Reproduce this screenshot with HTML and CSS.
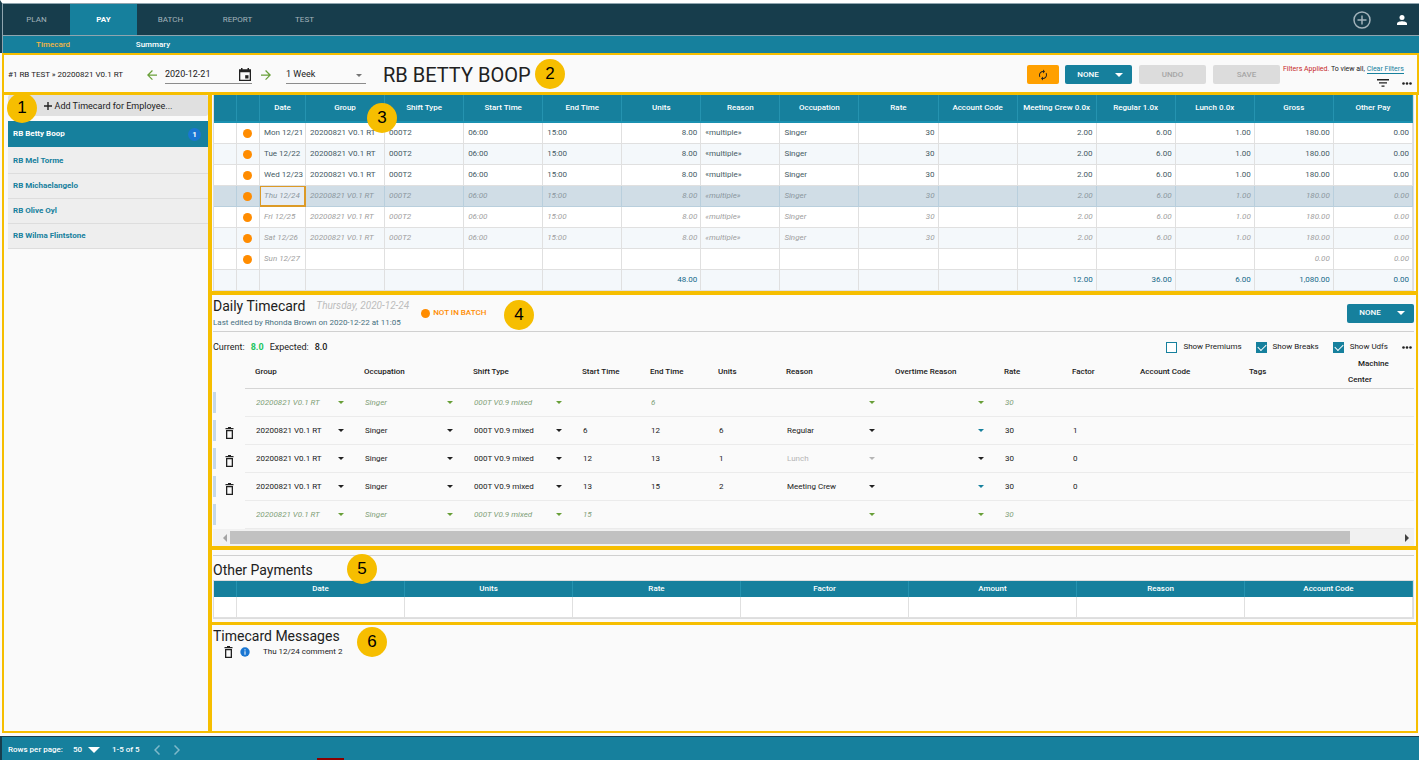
FILE: index.html
```html
<!DOCTYPE html>
<html lang="en">
<head>
  <meta charset="UTF-8" />
  <meta name="viewport" content="width=device-width, initial-scale=1.0" />
  <title>Timecard</title>
  <link rel="stylesheet" href="styles.css">
</head>
<body>
  <svg class="sprite" aria-hidden="true">
    <symbol id="icon-trash" viewBox="0 0 9 12">
      <path d="M3 0h3v1h2.500v1.300H.5V1H3z" />
      <path d="M1 3h7v9H1zM2.300 4.300v6.400h4.400V4.300z" fill-rule="evenodd" />
    </symbol>
    <symbol id="icon-dots" viewBox="0 0 10 3">
      <circle cx="1.5" cy="1.5" r="1.3" /><circle cx="5" cy="1.5" r="1.3" /><circle cx="8.5" cy="1.5" r="1.3" />
    </symbol>
    <symbol id="icon-arrow" viewBox="4 4 16 16">
      <path d="M12 4l-1.4 1.4 5.6 5.6H4v2h12.2l-5.6 5.6L12 20l8-8z" />
    </symbol>
  </svg>

  <header class="header">
    <nav class="tabs">
      <a href="#plan">PLAN</a>
      <a href="#pay" class="active">PAY</a>
      <a href="#batch">BATCH</a>
      <a href="#report">REPORT</a>
      <a href="#test">TEST</a>
      <div class="tabs-actions">
        <button class="icon-btn add-icon" aria-label="Add">
          <svg width="18" height="18" viewBox="0 0 18 18"><circle cx="9" cy="9" r="8" /><path d="M9 4.5v9M4.5 9h9" /></svg>
        </button>
        <button class="icon-btn account" aria-label="Account">
          <svg width="10" height="10" viewBox="0 0 10 10"><circle cx="5" cy="2.5" r="2.5" /><path d="M0 10V8.600C0 7 3 6.200 5 6.200s5 .8 5 2.400V10z" /></svg>
        </button>
      </div>
    </nav>
    <nav class="subtabs">
      <a href="#timecard" class="active">Timecard</a>
      <a href="#summary">Summary</a>
    </nav>
  </header>

  <div class="toolbar">
    <span class="breadcrumb">#1 RB TEST » 20200821 V0.1 RT</span>
    <button class="icon-btn green prev" aria-label="Previous period"><svg width="10" height="10"><use href="#icon-arrow" /></svg></button>
    <div class="date-field">
      <input type="text" value="2020-12-21" aria-label="Start date">
      <svg width="12" height="13" viewBox="0 0 12 13"><path d="M2 0h1.500v1.200h5V0H10v1.200h2V13H0V1.200h2zM1.300 4.200v7.500h9.400V4.200z" fill-rule="evenodd" /><path d="M6.200 7.200h3.300v3.300H6.200z" /></svg>
    </div>
    <button class="icon-btn green" aria-label="Next period"><svg width="10" height="10"><use href="#icon-arrow" /></svg></button>
    <span class="select period">
      <select aria-label="Period"><option>1 Week</option></select>
    </span>
    <h1>RB BETTY BOOP</h1>
    <div class="toolbar-actions">
      <button class="btn refresh" aria-label="Refresh">
        <svg width="12" height="12" viewBox="0 0 24 24"><path d="M12 6v3l4-4-4-4v3c-4.420 0-8 3.580-8 8 0 1.570.46 3.030 1.240 4.260L6.700 14.800C6.250 13.970 6 13.010 6 12c0-3.310 2.690-6 6-6zm6.760 1.740L17.300 9.200c.44.84.7 1.790.7 2.800 0 3.310-2.690 6-6 6v-3l-4 4 4 4v-3c4.420 0 8-3.580 8-8 0-1.570-.46-3.030-1.240-4.260z" /></svg>
      </button>
      <button class="btn primary">NONE <i class="caret"></i></button>
      <button class="btn" disabled>UNDO</button>
      <button class="btn" disabled>SAVE</button>
    </div>
    <div class="filter-info">
      <p><span class="warn">Filters Applied.</span> To view all, <a href="#clear">Clear Filters</a></p>
      <div class="filter-icons">
        <button class="icon-btn" aria-label="Filter"><svg width="12" height="8" viewBox="0 0 12 8"><path d="M0 0h12v1.400H0zM2 3.200h8v1.400H2zM4.500 6.400h3v1.400h-3z" /></svg></button>
        <button class="icon-btn" aria-label="More"><svg width="10" height="3"><use href="#icon-dots" /></svg></button>
      </div>
    </div>
    <span class="marker marker-2">2</span>
  </div>

  <main class="layout">
    <aside class="sidebar">
      <button class="add-btn">
        <svg width="8" height="8" viewBox="0 0 8 8"><path d="M3.300 0h1.400v3.300H8v1.400H4.700V8H3.300V4.700H0V3.300h3.300z" /></svg>
        Add Timecard for Employee...
      </button>
      <ul class="employees">
        <li class="active"><a href="#boop">RB Betty Boop</a><span class="count">1</span></li>
        <li><a href="#torme">RB Mel Torme</a></li>
        <li><a href="#michaelangelo">RB Michaelangelo</a></li>
        <li><a href="#oyl">RB Olive Oyl</a></li>
        <li><a href="#flintstone">RB Wilma Flintstone</a></li>
      </ul>
      <span class="marker marker-1">1</span>
    </aside>

    <div class="content">
      <section class="panel">
        <table class="grid week">
          <colgroup><col class="col-icon"><col class="col-icon"><col class="col-date"></colgroup>
          <thead>
            <tr id="week-head"></tr>
          </thead>
          <tbody id="week-body"></tbody>
        </table>
        <span class="marker marker-3">3</span>
      </section>

      <section class="panel">
        <div class="daily-head">
          <div>
            <div class="daily-title">
              <h2>Daily Timecard</h2>
              <em>Thursday, 2020-12-24</em>
            </div>
            <p class="edited">Last edited by Rhonda Brown on 2020-12-22 at 11:05</p>
          </div>
          <span class="batch-status"><i class="dot"></i>NOT IN BATCH</span>
          <button class="btn primary">NONE <i class="caret"></i></button>
        </div>
        <div class="daily-totals">
          <span>Current:</span> <b class="ok">8.0</b>
          <span>Expected:</span> <b>8.0</b>
          <div class="options">
            <label><input type="checkbox"> Show Premiums</label>
            <label><input type="checkbox" checked> Show Breaks</label>
            <label><input type="checkbox" checked> Show Udfs</label>
            <button class="icon-btn" aria-label="More"><svg width="10" height="3"><use href="#icon-dots" /></svg></button>
          </div>
        </div>
        <table class="daily">
          <colgroup>
            <col class="col-tools"><col class="col-wide"><col class="col-wide"><col class="col-wide">
            <col class="col-small"><col class="col-small"><col class="col-small">
            <col class="col-wide"><col class="col-wide">
            <col class="col-small"><col class="col-small">
            <col class="col-wide"><col class="col-wide"><col>
          </colgroup>
          <thead>
            <tr>
              <td></td>
              <th>Group</th><th>Occupation</th><th>Shift Type</th>
              <th>Start Time</th><th>End Time</th><th>Units</th>
              <th>Reason</th><th>Overtime Reason</th>
              <th>Rate</th><th>Factor</th>
              <th>Account Code</th><th>Tags</th><th>Machine Center</th>
            </tr>
          </thead>
          <tbody id="daily-body"></tbody>
        </table>
        <div class="scrollbar">
          <button class="scroll-left" aria-label="Scroll left"></button>
          <div class="track"><div class="thumb"></div></div>
          <button class="scroll-right" aria-label="Scroll right"></button>
        </div>
        <span class="marker marker-4">4</span>
      </section>

      <section class="panel payments">
        <h2>Other Payments</h2>
        <table class="grid">
          <colgroup><col class="col-icon"></colgroup>
          <thead>
            <tr><th></th><th>Date</th><th>Units</th><th>Rate</th><th>Factor</th><th>Amount</th><th>Reason</th><th>Account Code</th></tr>
          </thead>
          <tbody>
            <tr><td></td><td></td><td></td><td></td><td></td><td></td><td></td><td></td></tr>
          </tbody>
        </table>
        <span class="marker marker-5">5</span>
      </section>

      <section class="panel messages">
        <h2>Timecard Messages</h2>
        <div class="message">
          <button class="icon-btn" aria-label="Delete message"><svg width="9" height="12"><use href="#icon-trash" /></svg></button>
          <svg class="info" width="10" height="10" viewBox="0 0 10 10"><circle cx="5" cy="5" r="4.700" /><path d="M4.500 2.200h1v1.200h-1zM4.500 4.200h1v3.500h-1z" /></svg>
          <span>Thu 12/24 comment 2</span>
        </div>
        <span class="marker marker-6">6</span>
      </section>
    </div>
  </main>

  <footer class="footer">
    <label for="rows-per-page">Rows per page:</label>
    <span class="select rows">
      <select id="rows-per-page"><option>50</option></select>
    </span>
    <span>1-5 of 5</span>
    <button class="icon-btn" aria-label="Previous page"><svg width="6" height="10" viewBox="0 0 6 10"><path d="M5.500.5L1 5l4.500 4.500" /></svg></button>
    <button class="icon-btn" aria-label="Next page"><svg width="6" height="10" viewBox="0 0 6 10"><path d="M.5.5L5 5 .5 9.500" /></svg></button>
    <i class="footer-flag"></i>
  </footer>

  <script src="script.js"></script>
</body>
</html>
```
FILE: styles.css
```css
* {
  box-sizing: border-box;
  margin: 0;
  padding: 0;
}
body {
  font-family: Roboto, "Liberation Sans", sans-serif;
  font-size: 8px;
  line-height: 12px;
  color: #212121;
  background-color: #fafafa;
  display: flex;
  flex-direction: column;
  min-height: 100vh;
}
button, input, select {
  font: inherit;
  color: inherit;
  border: none;
  background: none;
}
button {
  cursor: pointer;
}
a {
  color: inherit;
  text-decoration: none;
}
svg {
  display: block;
  fill: currentColor;
}
.sprite {
  position: absolute;
  width: 0;
  height: 0;
}
.icon-btn {
  display: flex;
  align-items: center;
}

/* header */
.header {
  border-top: 3px solid #fff;
  background-color: #8fa5af;
  padding-top: 1px;
  border-left: 2px solid #173d4c;
  padding-left: 1px;
}
.tabs {
  display: flex;
  height: 31px;
  margin-bottom: 1px;
  background-color: #173d4c;
  color: #a3b3bb;
}
.tabs a {
  width: 67px;
  line-height: 31px;
  text-align: center;
}
.tabs a.active {
  background-color: #16809d;
  color: #fff;
  font-weight: 700;
}
.tabs-actions {
  display: flex;
  gap: 26px;
  margin-left: auto;
  padding-right: 12px;
}
.add-icon svg {
  fill: none;
  stroke: #a3b3bb;
  stroke-width: 1.5;
}
.account {
  color: #fff;
}
.subtabs {
  display: flex;
  height: 17px;
  background-color: #16809d;
  color: #fff;
  font-weight: 500;
}
.subtabs a {
  width: 100px;
  line-height: 18px;
  text-align: center;
}
.subtabs a.active {
  color: #f2b544;
}

/* toolbar */
.toolbar {
  position: relative;
  display: flex;
  align-items: center;
  height: 42px;
  margin-left: 2px;
  padding: 2px 3px 0 4px;
  border: 2px solid #f6be00;
  border-bottom-width: 3px;
}
.toolbar h1 {
  margin-left: 17px;
  font-size: 20px;
  font-weight: 400;
  line-height: 24px;
  white-space: nowrap;
}
.breadcrumb {
  width: 124px;
  white-space: nowrap;
}
.green {
  color: #689f38;
}
.prev {
  margin-left: 15px;
  margin-right: 8px;
  transform: rotate(180deg);
}
.date-field {
  display: flex;
  align-items: center;
  width: 87px;
  height: 18px;
  margin-right: 9px;
  padding-right: 1px;
  border-bottom: 1px solid #8c8c8c;
  font-size: 9px;
}
.date-field input {
  flex: 1;
  min-width: 0;
}
.select {
  position: relative;
  display: block;
}
.select select {
  display: block;
  width: 100%;
  appearance: none;
}
.select::after {
  content: "";
  position: absolute;
  top: calc(50% - 2px);
  right: 10px;
  border: 3px solid transparent;
  border-top-color: currentColor;
  border-bottom: none;
  pointer-events: none;
}
.period {
  width: 80px;
  height: 18px;
  margin-left: 15px;
  border-bottom: 1px solid #8c8c8c;
  font-size: 9px;
}
.period select {
  height: 17px;
}
.period::after {
  top: 50%;
  right: 4px;
  border-top-color: #757575;
}
.toolbar-actions {
  display: flex;
  gap: 7px;
  margin-left: auto;
}
.btn {
  display: flex;
  align-items: center;
  justify-content: center;
  width: 67px;
  height: 19px;
  border-radius: 2px;
  font-weight: 500;
}
.btn:disabled {
  background-color: #dcdcdc;
  color: #a6a6a6;
}
.btn.primary {
  gap: 16px;
  padding-left: 3px;
  background-color: #16809d;
  color: #fff;
}
.btn.refresh {
  width: 32px;
  margin-right: -1px;
  background-color: #ffa000;
}
.caret {
  border: 4px solid transparent;
  border-top-color: currentColor;
  border-bottom: none;
}
.filter-info {
  align-self: flex-start;
  min-width: 131px;
  margin-left: 3px;
  padding-top: 7px;
  font-size: 7px;
  line-height: 10px;
  white-space: nowrap;
}
.filter-info a {
  color: #16809d;
  border-bottom: 1px solid #16809d;
}
.warn {
  color: #c62828;
}
.filter-icons {
  display: flex;
  justify-content: flex-end;
  gap: 13px;
  padding: 5px 2px 0 0;
}

/* numbered markers over the panels */
.marker {
  position: absolute;
  z-index: 2;
  width: 30px;
  height: 30px;
  border-radius: 50%;
  background-color: #f6be00;
  color: #000;
  font: 17px/30px "Liberation Sans", Arial, sans-serif;
  text-align: center;
}
.marker-1 { top: -2px; left: 3px; }
.marker-2 { top: 4px; left: 531px; }
.marker-3 { top: 8px; left: 155px; }
.marker-4 { top: 5px; left: 292px; }
.marker-5 { top: 4px; left: 135px; }
.marker-6 { top: 2px; left: 145px; }

.layout {
  flex: 1;
  display: flex;
  margin: 0 1px 3px 2px;
}
.sidebar {
  position: relative;
  width: 206px;
  padding-left: 4px;
  border-left: 2px solid #f6be00;
  border-bottom: 2px solid #f6be00;
}
.add-btn {
  display: flex;
  align-items: center;
  justify-content: center;
  gap: 3px;
  width: 100%;
  height: 21px;
  margin-bottom: 5px;
  background-color: #e0e0e0;
  border-radius: 2px;
  font-size: 9px;
}
.employees {
  list-style: none;
  background-color: #eee;
}
.employees li {
  display: flex;
  align-items: center;
  justify-content: space-between;
  height: 25px;
  padding: 0 7px 0 5px;
  border-bottom: 1px solid #ddd;
  color: #16809d;
  font-weight: 700;
}
.employees li.active {
  height: 26px;
  margin-bottom: 2px;
  border-bottom: none;
  background-color: #16809d;
  color: #fff;
}
.count {
  width: 13px;
  border-radius: 50%;
  line-height: 13px;
  background-color: #1976d2;
  text-align: center;
}

/* panels */
.content {
  flex: 1;
  display: flex;
  flex-direction: column;
  min-width: 0;
}
.panel {
  position: relative;
  padding: 0 2px 0 1px;
  border: 0 solid #f6be00;
  border-width: 0 2px 4px 4px;
}
.panel h2 {
  font-size: 14px;
  font-weight: 400;
  line-height: 20px;
}
.dot {
  display: block;
  width: 9px;
  height: 9px;
  border-radius: 50%;
  background-color: #ff8c00;
}

/* grids */
.grid {
  width: 100%;
  table-layout: fixed;
  border-collapse: separate;
  border-spacing: 0;
  border: 1px solid #ddd;
  border-width: 0 1px;
}
.col-icon { width: 23px; }
.col-date { width: 46px; }
.grid th {
  height: 16px;
  background-color: #16809d;
  border-right: 1px solid #2593b0;
  color: #fff;
  font-weight: 500;
  white-space: nowrap;
}
.grid td {
  height: 21px;
  padding: 0 4px;
  background-color: #fff;
  border-right: 1px solid #e0e0e0;
  border-bottom: 1px solid #e0e0e0;
  white-space: nowrap;
}
.week th {
  height: 28px;
  border-bottom: 2px solid #1a91b1;
}
.week td {
  color: #455a64;
}
.week tr:nth-child(even) td {
  background-color: #f4f8fb;
}
.week .num {
  text-align: right;
  padding-right: 3px;
}
.week .pending td {
  color: #9e9e9e;
  font-style: italic;
}
.week tr.selected td {
  background-color: #d0dde6;
  border-color: #b9cfdd;
  color: #8b979e;
}
.week tr.selected td:nth-child(3) {
  background-color: #e6ecf3;
  box-shadow: inset 0 0 0 1px #dc9a27;
  border-color: #dc9a27;
}
.week .total td {
  color: #16698a;
}
.week .dot {
  margin: 0 2px;
}

/* daily timecard */
.daily-head {
  display: flex;
  align-items: center;
  gap: 12px;
  height: 37px;
  border-bottom: 1px solid #d0d0d0;
}
.daily-head .btn {
  margin-left: auto;
}
.daily-title {
  display: flex;
  align-items: center;
  gap: 11px;
  margin-bottom: 2px;
  height: 18px;
}
.daily-title em {
  color: #bdbdbd;
  font-size: 10px;
}
.edited {
  color: #47707f;
}
.batch-status {
  display: flex;
  align-items: center;
  gap: 3px;
  color: #ff8c00;
  font-weight: 500;
}
.daily-totals {
  display: flex;
  align-items: center;
  gap: 6px;
  height: 24px;
  padding-top: 6px;
  font-size: 9px;
}
.daily-totals b {
  font-weight: 500;
}
.daily-totals .ok {
  color: #22c55e;
  font-weight: 700;
}
.options {
  display: flex;
  align-items: center;
  gap: 14px;
  margin-left: auto;
  padding-right: 2px;
  font-size: 8px;
}
.options label {
  display: flex;
  align-items: center;
  gap: 6px;
}
.options input {
  width: 11px;
  height: 11px;
  appearance: none;
  border: 1px solid #16809d;
  background-color: #fff;
}
.options input:checked {
  background-color: #16809d;
}
.options input:checked::before {
  content: "";
  display: block;
  width: 7px;
  height: 4px;
  margin: 1px;
  border: solid #fff;
  border-width: 0 0 1px 1px;
  transform: rotate(-45deg);
}
.daily {
  width: 100%;
  table-layout: fixed;
  border-collapse: separate;
  border-spacing: 0;
}
.col-tools { width: 32px; }
.col-wide { width: 109px; }
.col-small { width: 68px; }
.daily th {
  height: 33px;
  text-align: left;
  text-indent: 10px;
  line-height: 16px;
  font-weight: 500;
  border-bottom: 1px solid #d5d5d5;
}
.daily tbody td {
  height: 28px;
  padding-left: 11px;
  border-bottom: 1px solid #ebebeb;
}
.daily tbody td:first-child {
  padding: 0 0 2px;
  border-bottom: none;
}
.tools {
  display: flex;
  align-items: flex-end;
  height: 21px;
  border-left: 3px solid #c5d8e9;
  padding: 0 0 2px 9px;
}
.daily input {
  display: block;
  width: 100%;
}
.daily .default td {
  color: #7f9f78;
  font-style: italic;
}
.daily .default .select::after,
.daily .arrow-green::after {
  border-top-color: #689f38;
}
.daily .arrow-teal::after {
  border-top-color: #16809d;
}
.daily .muted {
  color: #b5b5b5;
}
.scrollbar {
  display: flex;
  align-items: center;
  height: 17px;
  background-color: #f1f1f1;
}
.scrollbar button {
  width: 17px;
  height: 17px;
}
.scroll-left::before,
.scroll-right::before {
  content: "";
  display: block;
  width: 4px;
  border: 4px solid transparent;
}
.scroll-left::before {
  margin-left: 6px;
  border-right-color: #a3a3a3;
  border-left: none;
}
.scroll-right::before {
  margin-left: 8px;
  border-left-color: #424242;
  border-right: none;
}
.track {
  flex: 1;
}
.thumb {
  width: 96%;
  height: 13px;
  background-color: #c1c1c1;
}

/* other payments and messages */
.payments {
  padding-top: 5px;
  padding-bottom: 3px;
  border-bottom-width: 3px;
}
.payments h2 {
  height: 25px;
  border-top: 1px solid #d0d0d0;
  line-height: 28px;
}
.payments .grid {
  border-width: 1px;
}
.messages {
  flex: 1;
  padding-top: 1px;
  border-bottom-width: 2px;
}
.message {
  display: flex;
  align-items: center;
  gap: 7px;
  padding-left: 11px;
}
.message span {
  margin-left: 6px;
}
.info {
  color: #1976d2;
}
.info path {
  fill: #fff;
}

/* footer */
.footer {
  position: relative;
  display: flex;
  align-items: center;
  height: 24px;
  padding: 2px 6px 0;
  border-top: 1px solid #173d4c;
  border-left: 2px solid #173d4c;
  background-color: #16809d;
  color: #fff;
  font-weight: 500;
}
.rows {
  width: 27px;
  margin: 0 12px 0 10px;
}
.rows::after {
  right: 0;
  border-width: 6px;
  border-bottom: none;
  top: calc(50% - 3px);
}
.footer .icon-btn {
  margin-left: 14px;
}
.footer .icon-btn svg {
  fill: none;
  stroke: #7fb9ca;
  stroke-width: 1.5;
}
.footer-flag {
  position: absolute;
  left: 315px;
  bottom: 0;
  width: 27px;
  height: 2px;
  background-color: #8b0000;
}
```
FILE: script.js
```js
const weekColumns = ['', '', 'Date', 'Group', 'Shift Type', 'Start Time', 'End Time', 'Units', 'Reason',
  'Occupation', 'Rate', 'Account Code', 'Meeting Crew 0.0x', 'Regular 1.0x', 'Lunch 0.0x', 'Gross', 'Other Pay'];
const numeric = ['Units', 'Rate', 'Meeting Crew 0.0x', 'Regular 1.0x', 'Lunch 0.0x', 'Gross', 'Other Pay'];

const worked = ['20200821 V0.1 RT', '000T2', '06:00', '15:00', '8.00', '«multiple»',
  'Singer', '30', '', '2.00', '6.00', '1.00', '180.00', '0.00'];
const off = ['', '', '', '', '', '', '', '', '', '', '', '', '0.00', '0.00'];
const totals = ['', '', '', '', '48.00', '', '', '', '', '12.00', '36.00', '6.00', '1,080.00', '0.00'];

const weekRows = [
  { date: 'Mon 12/21', cells: worked, state: '' },
  { date: 'Tue 12/22', cells: worked, state: '' },
  { date: 'Wed 12/23', cells: worked, state: '' },
  { date: 'Thu 12/24', cells: worked, state: 'pending selected' },
  { date: 'Fri 12/25', cells: worked, state: 'pending' },
  { date: 'Sat 12/26', cells: worked, state: 'pending' },
  { date: 'Sun 12/27', cells: off, state: 'pending' },
  { date: '', cells: totals, state: 'total' }
];

const dailyRows = [
  { start: '', end: '6', units: '', reason: '', rate: '30', factor: '', isDefault: true },
  { start: '6', end: '12', units: '6', reason: 'Regular', rate: '30', factor: '1', arrow: 'arrow-teal' },
  { start: '12', end: '13', units: '1', reason: 'Lunch', rate: '30', factor: '0', muted: true },
  { start: '13', end: '15', units: '2', reason: 'Meeting Crew', rate: '30', factor: '0', arrow: 'arrow-teal' },
  { start: '15', end: '', units: '', reason: '', rate: '30', factor: '', isDefault: true }
];

const renderWeek = () => {
  document.getElementById('week-head').innerHTML = weekColumns.map(name => `<th>${name}</th>`).join('');

  document.getElementById('week-body').innerHTML = weekRows.map(row => {
    const dot = row.date ? '<i class="dot"></i>' : '';
    const cells = row.cells.map((value, i) => {
      const cls = numeric.includes(weekColumns[i + 3]) ? ' class="num"' : '';
      return `<td${cls}>${value}</td>`;
    }).join('');
    return `<tr class="${row.state}"><td></td><td>${dot}</td><td>${row.date}</td>${cells}</tr>`;
  }).join('');
};

const selectCell = (label, value, cls = '') =>
  `<td><span class="select ${cls}"><select aria-label="${label}"><option>${value}</option></select></span></td>`;

const inputCell = (label, value) =>
  `<td><input type="text" aria-label="${label}" value="${value}"></td>`;

const renderDaily = () => {
  document.getElementById('daily-body').innerHTML = dailyRows.map(row => {
    const trash = row.isDefault ? '' :
      '<button class="icon-btn" aria-label="Delete row"><svg width="9" height="12"><use href="#icon-trash" /></svg></button>';
    return `<tr class="${row.isDefault ? 'default' : ''}">
      <td><div class="tools">${trash}</div></td>
      ${selectCell('Group', '20200821 V0.1 RT')}
      ${selectCell('Occupation', 'Singer')}
      ${selectCell('Shift Type', '000T V0.9 mixed')}
      ${inputCell('Start Time', row.start)}
      ${inputCell('End Time', row.end)}
      ${inputCell('Units', row.units)}
      ${selectCell('Reason', row.reason, row.muted ? 'muted' : '')}
      ${selectCell('Overtime Reason', '', row.arrow || '')}
      ${inputCell('Rate', row.rate)}
      ${inputCell('Factor', row.factor)}
      <td></td><td></td><td></td>
    </tr>`;
  }).join('');
};

renderWeek();
renderDaily();
```
